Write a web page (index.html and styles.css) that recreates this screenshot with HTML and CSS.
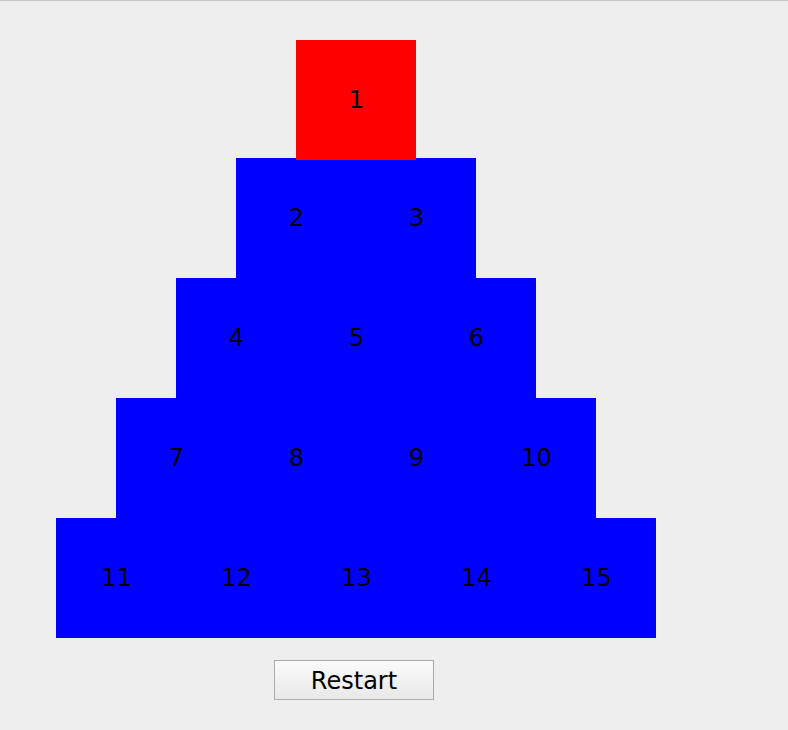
FILE: index.html
```html
<!DOCTYPE html>
<html lang="en">
<head>
    <meta charset="UTF-8">
    <title>Peg Solitaire</title>
    <link rel="stylesheet" href="styles.css">
</head>
<body>
    <div class="board">
        <!-- Triangle of pegs -->
        <div class="row top">
            <div class="peg selected">1</div>
        </div>
        <div class="row">
            <div class="peg">2</div>
            <div class="peg">3</div>
        </div>
        <div class="row">
            <div class="peg">4</div>
            <div class="peg">5</div>
            <div class="peg">6</div>
        </div>
        <div class="row">
            <div class="peg">7</div>
            <div class="peg">8</div>
            <div class="peg">9</div>
            <div class="peg">10</div>
        </div>
        <div class="row">
            <div class="peg">11</div>
            <div class="peg">12</div>
            <div class="peg">13</div>
            <div class="peg">14</div>
            <div class="peg">15</div>
        </div>

        <div class="controls">
            <button class="restart">Restart</button>
        </div>
    </div>
</body>
</html>
```

FILE: styles.css
```css
body {
    margin: 0;
    padding: 0;
    background-color: #eeeeee;
    border-top: 1px solid #c6c6c6;
    font-family: "DejaVu Sans", sans-serif;
}

.board {
    width: 600px;
    padding: 39px 0 0 56px;
}

.row {
    display: flex;
    justify-content: center;
}

.row.top {
    position: relative;
    z-index: 1;
    margin-bottom: -2px;
}

.peg {
    width: 120px;
    height: 120px;
    display: flex;
    align-items: center;
    justify-content: center;
    padding-left: 1px;
    box-sizing: border-box;
    background-color: #0000ff;
    color: #000;
    font-size: 24px;
}

.peg.selected {
    background-color: #ff0000;
}

.controls {
    margin-top: 22px;
    padding-left: 218px;
}

.restart {
    width: 160px;
    height: 40px;
    border: 1px solid #ababab;
    background: linear-gradient(#fbfbfb, #e8e8e8);
    font-family: "DejaVu Sans", sans-serif;
    font-size: 24px;
    color: #000;
    padding: 2px 0 0 0;
}
```
